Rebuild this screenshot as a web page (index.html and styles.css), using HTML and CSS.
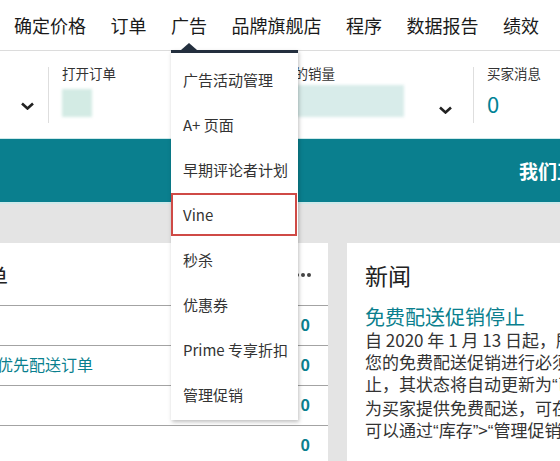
FILE: index.html
```html
<!DOCTYPE html>
<html lang="zh-CN">
<head>
    <meta charset="UTF-8">
    <meta name="viewport" content="width=device-width, initial-scale=1.0">
    <title>卖家平台</title>
    <link rel="stylesheet" href="styles.css">
</head>
<body>
    <nav class="topnav">
        <a class="nav-item">确定价格</a>
        <a class="nav-item">订单</a>
        <a class="nav-item active">广告</a>
        <a class="nav-item">品牌旗舰店</a>
        <a class="nav-item">程序</a>
        <a class="nav-item">数据报告</a>
        <a class="nav-item">绩效</a>
    </nav>

    <!-- 广告菜单 -->
    <div class="dropdown">
        <span class="caret"></span>
        <a class="menu-item">广告活动管理</a>
        <a class="menu-item">A+ 页面</a>
        <a class="menu-item">早期评论者计划</a>
        <a class="menu-item marked">Vine</a>
        <a class="menu-item">秒杀</a>
        <a class="menu-item">优惠券</a>
        <a class="menu-item">Prime 专享折扣</a>
        <a class="menu-item">管理促销</a>
    </div>

    <section class="metrics">
        <div class="metric metric-first">
            <svg class="chevron" viewBox="0 0 14 8"><polyline points="1.5,1.5 7,6.5 12.5,1.5"/></svg>
        </div>
        <div class="metric metric-orders">
            <div class="metric-label">打开订单</div>
            <div class="blur-box small"></div>
        </div>
        <div class="metric metric-sales">
            <div class="metric-label">已订购商品的销量</div>
            <div class="metric-value">
                <div class="blur-box wide"></div>
                <svg class="chevron" viewBox="0 0 14 8"><polyline points="1.5,1.5 7,6.5 12.5,1.5"/></svg>
            </div>
        </div>
        <div class="metric metric-msgs">
            <div class="metric-label">买家消息</div>
            <div class="metric-number">0</div>
        </div>
    </section>

    <div class="banner">我们正在改进卖家平台的使用体验</div>

    <main class="cards">
        <div class="card card-actions">
            <div class="card-head">
                <span class="card-title">订单</span>
                <svg class="more" viewBox="0 0 18 6"><circle cx="3" cy="3" r="2"/><circle cx="9" cy="3" r="2"/><circle cx="15" cy="3" r="2"/></svg>
            </div>
            <div class="row"><span></span><span class="count">0</span></div>
            <div class="row"><span class="link">优先配送订单</span><span class="count">0</span></div>
            <div class="row"><span></span><span class="count">0</span></div>
            <div class="row"><span></span><span class="count">0</span></div>
        </div>

        <div class="card card-news">
            <h2>新闻</h2>
            <a class="news-title">免费配送促销停止</a>
            <p class="news-text">
                <span>自 2020 年 1 月 13 日起，所有免费配送促销都将停止。</span>
                <span>您的免费配送促销进行必须在此日期之前结束，否则将被终</span>
                <span>止，其状态将自动更新为<q>已停止</q>。如果您仍然希望</span>
                <span>为买家提供免费配送，可在配送设置中进行设置。您</span>
                <span>可以通过<q>库存</q>&gt;<q>管理促销</q>查看您的促销。</span>
            </p>
        </div>
    </main>
</body>
</html>
```

FILE: styles.css
```css
body {
    margin: 0;
    width: 560px;
    height: 461px;
    overflow: hidden;
    position: relative;
    font-family: "Noto Sans CJK SC", "Noto Sans", "Liberation Sans", sans-serif;
    color: #222;
    background: #e4e4e4;
}
a { color: inherit; text-decoration: none; }

.topnav {
    display: flex;
    align-items: center;
    gap: 24.5px;
    height: 50px;
    padding-left: 14px;
    background: #fff;
    border-bottom: 1px solid #dcdcdc;
    font-size: 18px;
    color: #1a1a1a;
}

/* dropdown */
.dropdown {
    position: absolute;
    left: 171px;
    top: 50px;
    width: 127px;
    padding: 4px 0 3px;
    background: #fff;
    border-top: 3px solid #232f3e;
    box-shadow: 1px 2px 4px rgba(0,0,0,0.25);
    z-index: 5;
}
.caret {
    position: absolute;
    left: 10px;
    top: -10px;
    border-left: 8px solid transparent;
    border-right: 8px solid transparent;
    border-bottom: 7px solid #232f3e;
}
.menu-item {
    display: flex;
    align-items: center;
    height: 45px;
    padding-left: 12px;
    font-size: 15px;
    color: #333;
}
.menu-item.marked {
    height: 43px;
    margin: 1px 1px 1px 0;
    box-shadow: inset 0 0 0 2px #cf4a46;
}

/* metrics */
.metrics {
    display: flex;
    height: 87px;
    background: #fff;
}
.metric {
    margin-top: 16px;
    height: 56px;
    box-sizing: border-box;
}
.metric-first {
    width: 49px;
    border-right: 1px solid #dedede;
    position: relative;
}
.metric-first .chevron {
    position: absolute;
    left: 20px;
    top: 35px;
}
.metric-orders { width: 166px; padding-left: 13px; }
.metric-sales {
    width: 259px;
    padding: 0 20px 0 12px;
    border-right: 1px solid #dedede;
}
.metric-msgs { padding-left: 13px; }
.metric-label {
    font-size: 13.5px;
    color: #333;
    line-height: 16px;
    margin-top: -2px;
}
.metric-value {
    display: flex;
    align-items: flex-end;
    justify-content: space-between;
}
.blur-box {
    background: #d3ebe4;
    filter: blur(1.5px);
}
.blur-box.small { width: 30px; height: 28px; margin-top: 8px; }
.blur-box.wide { width: 177px; height: 32px; margin-top: 4px; background: #d8ecea; }
.metric-value .chevron { margin-bottom: 3px; }
.chevron {
    width: 15px;
    height: 8px;
    fill: none;
    stroke: #222;
    stroke-width: 2.6;
}
.metric-number {
    font-size: 22px;
    color: #008296;
    margin-top: 8px;
    line-height: 28px;
}

/* banner */
.banner {
    height: 63px;
    line-height: 63px;
    padding-left: 519px;
    white-space: nowrap;
    overflow: hidden;
    background: #0a7f8e;
    border-top: 1px solid #cfe9ea;
    border-bottom: 2px solid #cfe9ea;
    color: #fff;
    font-size: 19px;
    font-weight: bold;
}

/* cards */
.cards {
    display: grid;
    grid-template-columns: 328px 1fr;
    gap: 19px;
    padding-top: 39px;
    width: 620px;
}
.card {
    background: #fff;
    height: 240px;
}
.card-head {
    display: flex;
    justify-content: space-between;
    align-items: center;
    height: 62px;
    padding-right: 16px;
}
.card-title {
    font-size: 22px;
    margin-left: -36px;
    margin-top: 1px;
}
.more {
    width: 18px;
    height: 6px;
    fill: #444;
    margin-top: 2px;
}
.row {
    display: flex;
    justify-content: space-between;
    align-items: center;
    border-top: 1px solid #a3a3a3;
    padding-right: 18px;
    padding-bottom: 3px;
    box-sizing: border-box;
    height: 40px;
}
.link {
    font-size: 16px;
    color: #0a7f8e;
    margin-left: -3px;
}
.count {
    font-size: 16px;
    font-weight: bold;
    color: #0a7f8e;
}

.card-news {
    padding: 17px 0 0 18px;
    overflow: hidden;
}
.card-news h2 {
    margin: 0;
    font-size: 23px;
    font-weight: normal;
    line-height: 30px;
    color: #222;
}
.news-title {
    display: block;
    margin-top: 15px;
    font-size: 20px;
    line-height: 24px;
    color: #0a7f8e;
}
.news-text {
    margin: 0;
    font-size: 17px;
    line-height: 22px;
    color: #333;
}
.news-text span {
    display: block;
    white-space: nowrap;
}
.news-text q {
    quotes: "\201C" "\201D";
}
.news-text q::before,
.news-text q::after {
    font-family: "Liberation Sans", sans-serif;
}
```
